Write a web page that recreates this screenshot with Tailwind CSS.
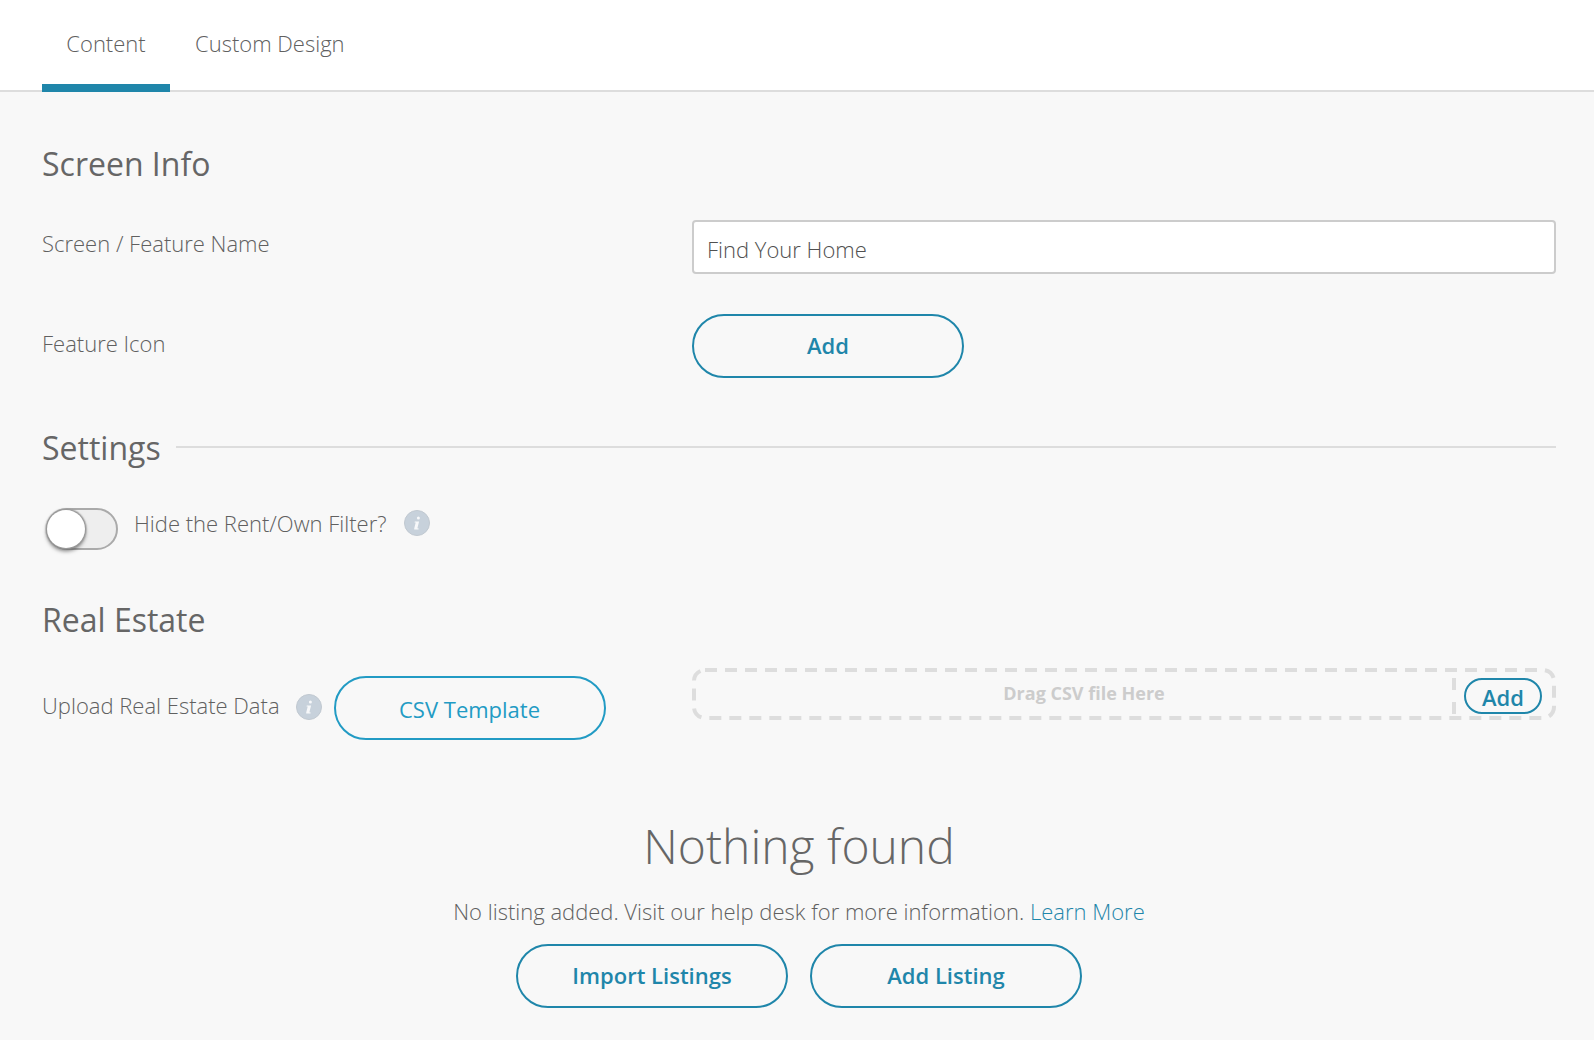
<!DOCTYPE html>
<html lang="en">
<head>
<meta charset="utf-8">
<meta name="viewport" content="width=device-width, initial-scale=1">
<title>Find Your Home</title>
<script src="https://cdn.jsdelivr.net/npm/@tailwindcss/browser@4"></script>
</head>
<body class="min-h-screen bg-[#f8f8f8] font-['Open_Sans',sans-serif] text-[22px] leading-8 font-light text-[#606060]">
<header class="border-b-2 border-[#ddd] bg-white pl-[42px]">
  <nav class="-mb-0.5 flex h-[92px]">
    <a href="#content" class="min-w-32 border-b-8 border-[#1f86aa] px-6 pt-[27px] text-center">Content</a>
    <a href="#design" class="px-[25px] pt-[27px]">Custom Design</a>
  </nav>
</header>

<main class="pt-12 pr-[38px] pb-8 pl-[42px]">
  <section>
    <h2 class="text-[32px] leading-[48px] font-normal text-[#666]">Screen Info</h2>
    <div class="mt-8 grid grid-cols-[650fr_864fr]">
      <label for="name" class="pt-[7px]">Screen / Feature Name</label>
      <input id="name" type="text" value="Find Your Home" class="h-[54px] w-full rounded border-2 border-[#ccc] bg-white px-[13px] pt-1 text-[#505050] outline-none">
    </div>
    <div class="mt-10 grid grid-cols-[650fr_864fr]">
      <span class="pt-[13px]">Feature Icon</span>
      <button type="button" class="h-16 w-[272px] rounded-full border-2 border-[#1f86aa] pb-0.5 font-semibold text-[#1f86aa]">Add</button>
    </div>
  </section>

  <section class="mt-[46px]">
    <div class="flex items-center gap-[15px]">
      <h2 class="text-[32px] leading-[48px] font-normal text-[#666]">Settings</h2>
      <hr class="mb-0.5 grow border-t-2 border-[#ddd]">
    </div>
    <div class="mt-9 flex h-[42px] items-start pl-1">
      <input id="hide" type="checkbox" class="h-[42px] w-[72px] shrink-0 appearance-none rounded-full border-2 border-[#aaa] bg-[#eee] before:-ml-px before:block before:size-[38px] before:rounded-full before:bg-white before:shadow-[0_0_0_1px_#999,0_0_1px_2px_#9998,0_3px_4px_#0008] checked:before:ml-[31px]">
      <label for="hide" class="ml-4 leading-[30px]">Hide the Rent/Own Filter?</label>
      <button type="button" aria-label="About the filter" class="mt-0.5 ml-[17px] shrink-0">
        <svg class="size-[26px]" viewBox="0 0 26 26"><circle cx="13" cy="13" r="12.5" fill="#c7d1db" stroke="#c0c8d0"/><g fill="#fff" fill-opacity=".85"><circle cx="14.4" cy="8" r="1.5"/><path d="M10.8 11.6h4.3l-1.6 6.2q-.2.8.5.8h.8l-.3 1h-3.6q-1 0-.7-1.2l1.5-5.8h-1.2z"/></g></svg>
      </button>
    </div>
  </section>

  <section class="mt-[46px]">
    <h2 class="text-[32px] leading-[48px] font-normal text-[#666]">Real Estate</h2>
    <div class="mt-6 grid grid-cols-[650fr_864fr]">
      <div class="flex items-start pt-2">
        <label for="csv" class="mt-[13px]">Upload Real Estate Data</label>
        <button type="button" aria-label="About the data file" class="mt-[18px] ml-4 shrink-0">
          <svg class="size-[26px]" viewBox="0 0 26 26"><circle cx="13" cy="13" r="12.5" fill="#c7d1db" stroke="#c0c8d0"/><g fill="#fff" fill-opacity=".85"><circle cx="14.4" cy="8" r="1.5"/><path d="M10.8 11.6h4.3l-1.6 6.2q-.2.8.5.8h.8l-.3 1h-3.6q-1 0-.7-1.2l1.5-5.8h-1.2z"/></g></svg>
        </button>
        <button type="button" class="ml-3 h-16 w-[272px] rounded-full border-2 border-[#229bc4] pt-px font-normal text-[#229bc4]">CSV Template</button>
      </div>
      <div class="relative flex h-[52px] items-start">
        <svg class="absolute inset-0 size-full" fill="none" stroke="#ddd" stroke-width="4" aria-hidden="true">
          <rect x="2" y="2" rx="11" class="h-[calc(100%-4px)] w-[calc(100%-4px)]" stroke-dasharray="12 8"/>
        </svg>
        <span class="grow pt-[9px] pl-6 text-center text-lg leading-8 font-bold text-[#ccc]">Drag CSV file Here</span>
        <svg class="mt-2.5 h-9 w-1" viewBox="0 0 4 36" aria-hidden="true"><path d="M0 0h4v12H0zM0 24h4v12H0z" fill="#ddd"/></svg>
        <button id="csv" type="button" class="relative mt-2.5 mr-[14px] ml-2 flex h-9 w-[78px] items-center justify-center rounded-full border-2 border-[#1f86aa] pt-0.5 font-semibold text-[#1f86aa]">Add</button>
      </div>
    </div>
  </section>

  <section class="mt-[74px] text-center">
    <h1 class="text-5xl leading-[64px] font-light text-[#666]">Nothing found</h1>
    <p class="mt-[17px]">No listing added. Visit our help desk for more information. <a href="#help" class="text-[#1f86aa]">Learn More</a></p>
    <div class="mt-[17px] flex justify-center gap-[22px]">
      <button type="button" class="h-16 w-[272px] rounded-full border-2 border-[#1f86aa] pb-0.5 font-semibold text-[#1f86aa]">Import Listings</button>
      <button type="button" class="h-16 w-[272px] rounded-full border-2 border-[#1f86aa] pb-0.5 font-semibold text-[#1f86aa]">Add Listing</button>
    </div>
  </section>
</main>
</body>
</html>
